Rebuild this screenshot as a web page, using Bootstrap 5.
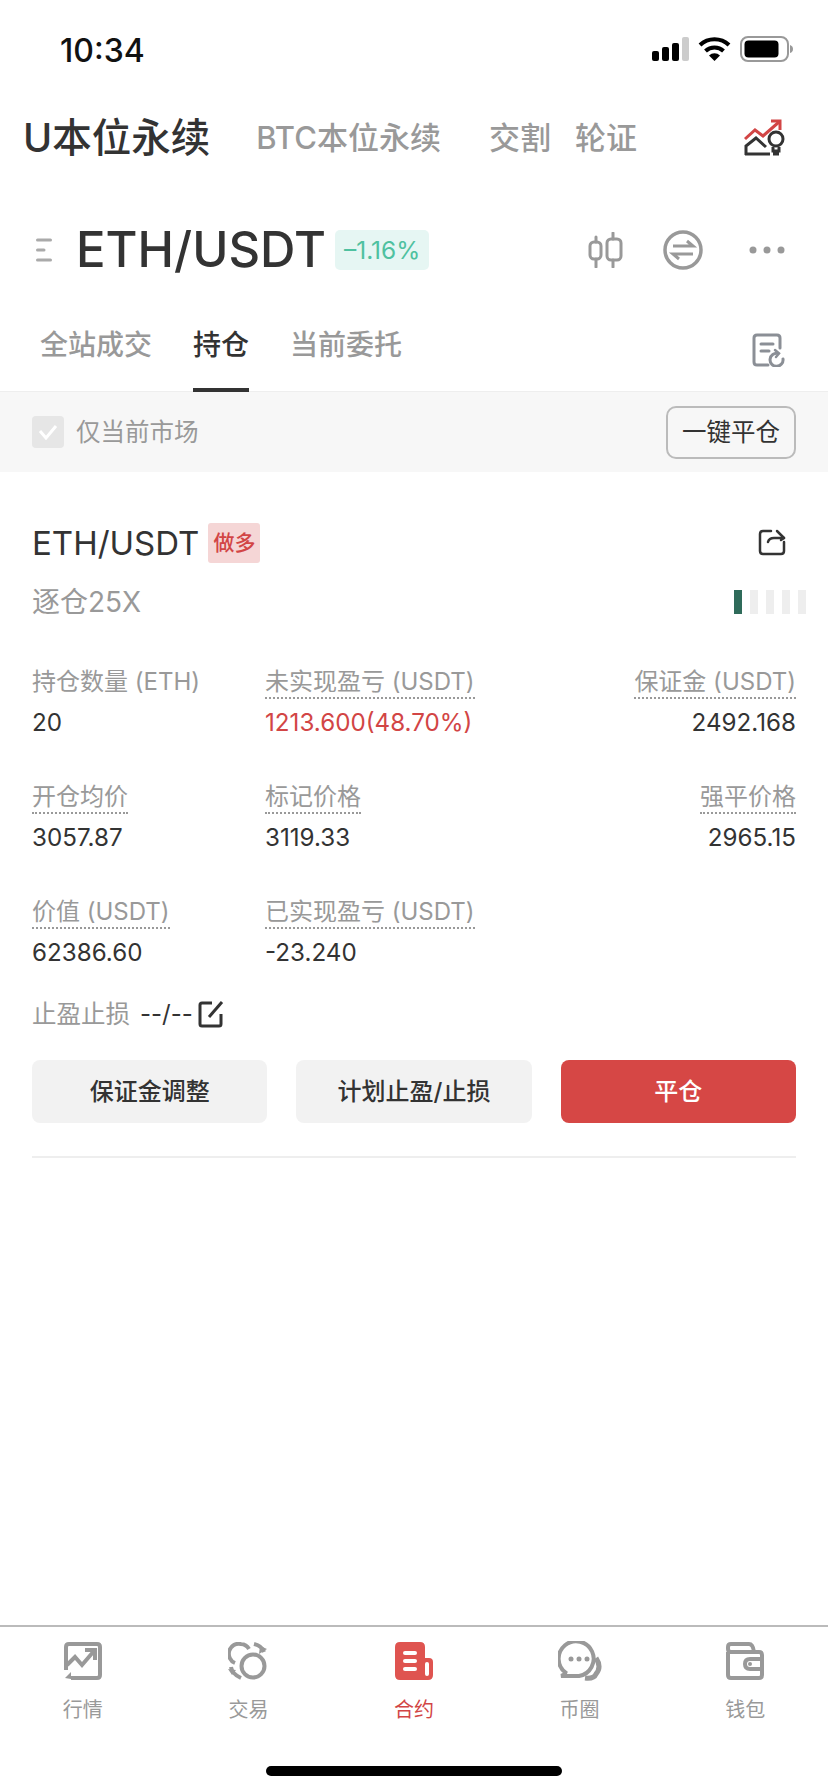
<!DOCTYPE html>
<html lang="zh">
<head>
<meta charset="utf-8">
<title>持仓</title>
<link href="https://cdn.jsdelivr.net/npm/bootstrap@5.3.0/dist/css/bootstrap.min.css" rel="stylesheet">
<style>
html,body{margin:0;background:#fff}
body{width:828px;height:1792px;font-family:Inter,"Noto Sans CJK SC",sans-serif;color:#333;overflow:hidden}
.screen{height:1792px}
.status-row{height:88px;padding:31px 34px 0 60px}
.clock{font-size:32px;line-height:40px;font-weight:500;color:#111;width:92px}
.status-icons{margin-top:5px}
.market-row{height:100px;padding:0 43px 0 23px}
.mk-main{font-size:39.500px;line-height:50px;font-weight:500;color:#333}
.mk-sub{font-size:31px;line-height:50px;font-weight:500;color:#999}
.pair-row{height:76px;margin-top:24px;padding:0 41px 0 36px}
.pair-name{font-size:49px;line-height:60px;font-weight:500;color:#333;margin-left:24px}
.chg-tag{font-size:24.500px;line-height:40px;height:40px;padding:0 9px;background:#e6f6f3;color:#4fc1a0;border-radius:5px;margin-left:9px}
.sub-tabs{height:91px;padding:0 42px 0 40px;margin-top:13px;border-bottom:1px solid #eee}
.stab{font-size:28px;line-height:36px;font-weight:500;color:#999;height:91px;padding-top:26px}
.stab-on{color:#333;border-bottom:4px solid #333}
.filter-strip{height:80px;background:#f7f7f7;padding:0 32px}
.fake-check{width:32px;height:32px;background:#e6e6e6;border-radius:4px}
.filter-text{font-size:24.500px;color:#999}
.one-btn{font-size:24.500px;line-height:30px;color:#333;background:#fff0;border:2px solid #bbb;border-radius:10px;width:130px;height:53px;padding:0}
.position{padding:51px 32px 0}
.pos-name{font-size:33px;line-height:40px;color:#333}
.long-tag{font-size:21px;line-height:40px;height:40px;padding:0 5px;background:#f5d6d6;color:#d24545;border-radius:3px;margin-left:9px;font-weight:500}
.margin-line{font-size:28px;line-height:36px;color:#999;margin-top:21px}
.gauge{gap:8px;margin-right:-10px}
.gauge i{display:block;width:8px;height:24px;background:#eee}
.gauge i.lit{background:#2f6b5a}
.data-grid{margin-top:46px;display:grid;grid-template-columns:233px 1fr auto;row-gap:42px}
.cell-head{font-size:24px;line-height:32px;color:#999;height:33px}
.dotted{border-bottom:2px dotted #999;display:inline-block;height:33px}
.cell-val{font-size:24.200px;line-height:32px;color:#333;margin-top:8px}
.loss{color:#d24545}
.stop-line{margin-top:27px;height:36px}
.stop-label{font-size:24.500px;color:#999}
.stop-val{font-size:24px;color:#333;margin:0 5px 0 10px}
.act-row{gap:29px;margin-top:28px}
.act-btn{flex:1 1 0;height:63px;font-size:24px;font-weight:500;color:#333;background:#f2f2f2;border:0;border-radius:8px;padding:0}
.act-red{background:#d64745;color:#fff}
.rule{height:2px;background:#eee;margin-top:33px}
.tabbar{border-top:2px solid #bbb;height:167px;margin-top:auto}
.tab-item{padding-top:15px;font-size:20px;line-height:30px;color:#999}
.tab-item svg{display:block;margin:0 auto 15px}
.tab-on{color:#d24545}
.home-bar{width:296px;height:10px;background:#000;border-radius:5px;margin:41px auto 0}
</style>
</head>
<body>
<div class="screen d-flex flex-column">
  <div class="status-row d-flex justify-content-between align-items-start">
    <span class="clock">10:34</span>
    <svg class="status-icons" width="142" height="26" viewBox="0 0 142 26"><rect x="0" y="15" width="7" height="10" rx="2"/><rect x="10" y="11" width="7" height="14" rx="2"/><rect x="20" y="7" width="7" height="18" rx="2"/><rect x="30" y="1" width="7" height="24" rx="2" fill="#ccc"/><g fill="none" stroke="#000" stroke-width="4"><path d="M48 9A21 21 0 0 1 77 9"/><path d="M53.500 15A13 13 0 0 1 71.500 15"/></g><path d="M62.500 25L57 19.500A8 8 0 0 1 68 19.500Z"/><rect x="89" y="1" width="47" height="24" rx="7" fill="none" stroke="#999" stroke-width="2"/><rect x="92.500" y="4.500" width="34" height="17" rx="4"/><path d="M138 9q3 1 3 4t-3 4Z" fill="#999"/></svg>
  </div>

  <div class="market-row d-flex align-items-center">
    <span class="mk-main">U本位永续</span>
    <span class="mk-sub" style="margin-left:46px">BTC本位永续</span>
    <span class="mk-sub" style="margin-left:48px">交割</span>
    <span class="mk-sub" style="margin-left:24px">轮证</span>
    <svg class="ms-auto" width="42" height="38" viewBox="0 0 42 38" fill="none" stroke-width="3"><path d="M2 20L12 11L20 17L36 3" stroke="#d24545"/><path d="M28 2H37V11" stroke="#d24545"/><path d="M3 36V27L13 19L23 28" stroke="#333"/><path d="M2 35H27" stroke="#333"/><circle cx="33" cy="20" r="7" stroke="#333"/><path d="M30 28V32H36V28M30 35H36" stroke="#333"/></svg>
  </div>

  <div class="pair-row d-flex align-items-center">
    <svg width="16" height="24" viewBox="0 0 16 24" stroke="#aaa" stroke-width="3" stroke-linecap="round"><path d="M1.500 2H14.500M1.500 12H8M1.500 22H14.500"/></svg>
    <span class="pair-name">ETH/USDT</span>
    <span class="chg-tag">–1.16%</span>
    <svg class="ms-auto" width="36" height="36" viewBox="0 0 36 36" fill="none" stroke="#999" stroke-width="3" stroke-linecap="round"><path d="M8 5V10M8 27V35M25 1V7M25 28V35"/><rect x="2" y="10" width="11" height="17" rx="4"/><rect x="19" y="7" width="14" height="21" rx="4"/></svg>
    <svg style="margin-left:38px" width="42" height="42" viewBox="0 0 42 42" fill="none" stroke="#999" stroke-width="3.500"><circle cx="21" cy="21" r="18"/><path d="M11 17H31L25 12M31 25H11L17 30" stroke-width="3"/></svg>
    <svg style="margin-left:45px" width="38" height="8" viewBox="0 0 38 8" fill="#999"><circle cx="4" cy="4" r="3.500"/><circle cx="18" cy="4" r="3.500"/><circle cx="32" cy="4" r="3.500"/></svg>
  </div>

  <div class="sub-tabs d-flex align-items-start">
    <span class="stab">全站成交</span>
    <span class="stab stab-on" style="margin-left:41px">持仓</span>
    <span class="stab" style="margin-left:41px">当前委托</span>
    <svg class="ms-auto" style="margin-top:32px" width="34" height="34" viewBox="0 0 34 34" fill="none" stroke="#8b8f96" stroke-width="3" stroke-linecap="round"><path d="M16 32H5Q2 32 2 29V5Q2 2 5 2H25Q28 2 28 5V15"/><path d="M9 11H21M9 18H17"/><path d="M31 26A6.500 6.500 0 1 1 26 20.500"/><path d="M23 17L27 20.500L24 24" stroke-width="2.500"/></svg>
  </div>

  <div class="filter-strip d-flex align-items-center">
    <span class="fake-check d-flex align-items-center justify-content-center"><svg width="20" height="16" viewBox="0 0 20 16" fill="none" stroke="#fff" stroke-width="3"><path d="M2 7L8 14L18 2"/></svg></span>
    <span class="filter-text ms-2 ps-1">仅当前市场</span>
    <button type="button" class="btn one-btn ms-auto">一键平仓</button>
  </div>

  <div class="position">
    <div class="d-flex align-items-center">
      <span class="pos-name">ETH/USDT</span>
      <span class="long-tag">做多</span>
      <svg class="ms-auto" style="margin-right:10px" width="28" height="28" viewBox="0 0 28 28" fill="none" stroke="#333" stroke-width="2.500" stroke-linecap="round" stroke-linejoin="round"><path d="M13 2H5Q2 2 2 5V22Q2 25 5 25H23Q26 25 26 22V13"/><path d="M10 13Q11 9 16 9H26"/><path d="M19 2L26 9L23 11"/></svg>
    </div>
    <div class="margin-line d-flex align-items-center justify-content-between">
      <span>逐仓25X</span>
      <span class="gauge d-flex"><i class="lit"></i><i></i><i></i><i></i><i></i></span>
    </div>

    <div class="data-grid">
      <div><div class="cell-head">持仓数量 (ETH)</div><div class="cell-val">20</div></div>
      <div><div class="cell-head"><span class="dotted">未实现盈亏 (USDT)</span></div><div class="cell-val loss">1213.600(48.70%)</div></div>
      <div class="text-end"><div class="cell-head"><span class="dotted">保证金 (USDT)</span></div><div class="cell-val">2492.168</div></div>

      <div><div class="cell-head"><span class="dotted">开仓均价</span></div><div class="cell-val">3057.87</div></div>
      <div><div class="cell-head"><span class="dotted">标记价格</span></div><div class="cell-val">3119.33</div></div>
      <div class="text-end"><div class="cell-head"><span class="dotted">强平价格</span></div><div class="cell-val">2965.15</div></div>

      <div><div class="cell-head"><span class="dotted">价值 (USDT)</span></div><div class="cell-val">62386.60</div></div>
      <div><div class="cell-head"><span class="dotted">已实现盈亏 (USDT)</span></div><div class="cell-val">-23.240</div></div>
      <div></div>
    </div>

    <div class="stop-line d-flex align-items-center">
      <span class="stop-label">止盈止损</span>
      <span class="stop-val">--/--</span>
      <svg width="26" height="28" viewBox="0 0 26 28" fill="none" stroke="#333" stroke-width="3"><path d="M14 3H4Q2 3 2 5V24Q2 26 4 26H21Q23 26 23 24V14"/><path d="M11 17L24 2"/></svg>
    </div>

    <div class="act-row d-flex">
      <button type="button" class="btn act-btn">保证金调整</button>
      <button type="button" class="btn act-btn">计划止盈/止损</button>
      <button type="button" class="btn act-btn act-red">平仓</button>
    </div>
    <div class="rule"></div>
  </div>

  <div class="tabbar">
    <div class="row g-0 text-center">
      <div class="col tab-item">
        <svg width="38" height="38" viewBox="0 0 38 38" fill="none" stroke="#999" stroke-width="4"><path d="M2 28V5Q2 2 5 2H33Q36 2 36 5V33Q36 36 33 36H7"/><path d="M3 23L11 15L18 23L30 9"/><path d="M21 8H31V18"/><path d="M1 36L7 30V37Z" fill="#999" stroke="none"/></svg>
        行情
      </div>
      <div class="col tab-item">
        <svg width="40" height="38" viewBox="0 0 40 38" fill="none" stroke="#999" stroke-width="4"><circle cx="25" cy="24" r="11.500"/><path d="M7 21A10 10 0 0 1 13 2A10 10 0 0 1 21 7"/><path d="M26 2Q34 4 36 10"/><path d="M31 12L39 7L32 4Z" fill="#999" stroke="none"/><path d="M3 25Q4 32 13 36"/><path d="M0 27L8 28L4 33Z" fill="#999" stroke="none"/></svg>
        交易
      </div>
      <div class="col tab-item tab-on">
        <svg width="38" height="38" viewBox="0 0 38 38"><path d="M5 0H25Q30 0 30 5V16H34Q38 16 38 20V33Q38 38 33 38H5Q0 38 0 33V5Q0 0 5 0Z" fill="#df5450"/><rect x="8" y="9" width="14" height="4" rx="2" fill="#fff"/><rect x="8" y="17" width="14" height="4" rx="2" fill="#fff"/><rect x="8" y="25" width="14" height="4" rx="2" fill="#fff"/><rect x="30" y="20" width="4" height="14" rx="2" fill="#fff"/></svg>
        合约
      </div>
      <div class="col tab-item">
        <svg width="44" height="40" viewBox="0 0 44 40" style="margin-bottom:14px;margin-top:-1px" fill="none" stroke="#999" stroke-width="4"><path d="M8 32A17.500 17.500 0 1 1 21 35H3Q7 34 8 30"/><circle cx="13" cy="18" r="2.500" fill="#999" stroke="none"/><circle cx="21" cy="18" r="2.500" fill="#999" stroke="none"/><circle cx="29" cy="18" r="2.500" fill="#999" stroke="none"/><path d="M38 17Q44 26 38 33Q36 38 27 37" stroke-width="5"/></svg>
        币圈
      </div>
      <div class="col tab-item">
        <svg width="38" height="38" viewBox="0 0 38 38" fill="none" stroke="#999" stroke-width="4"><path d="M2 10V33Q2 36 5 36H33Q36 36 36 33V13Q36 10 33 10H5Q2 10 2 7V5Q2 2 5 2H23Q27 2 28 10"/><path d="M36 17H24Q19 17 19 22Q19 27 24 27H36"/><circle cx="24" cy="22" r="2" fill="#999" stroke="none"/></svg>
        钱包
      </div>
    </div>
    <div class="home-bar"></div>
  </div>
</div>
<script src="https://cdn.jsdelivr.net/npm/bootstrap@5.3.0/dist/js/bootstrap.bundle.min.js"></script>
</body>
</html>
